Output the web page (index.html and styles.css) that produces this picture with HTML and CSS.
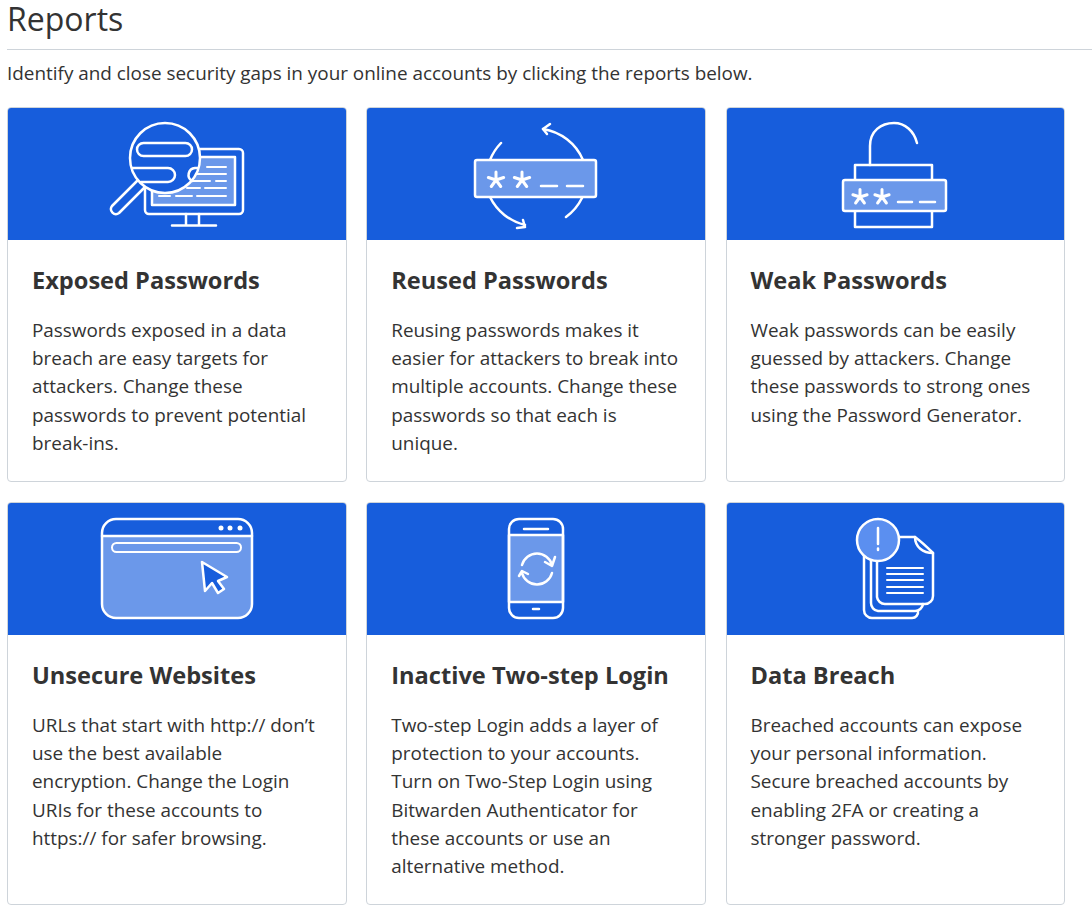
FILE: index.html
```html
<!DOCTYPE html>
<html>
    <head>
        <title>Reports</title>
        <meta charset="utf8"/>
        <link rel="stylesheet" href="styles.css">
    </head>
    <body>
        <div class="page-header"><h1>Reports</h1></div>
        <p class="intro">Identify and close security gaps in your online accounts by clicking the reports below.</p>
        <div class="report-list">
            <div class="card">
                <div class="card-head">
                    <svg class="art" width="146" height="112" viewBox="104 117 146 112">
                        <rect class="line" x="145" y="148" width="98" height="65" rx="4"/>
                        <rect class="line light" x="152" y="156" width="83" height="48"/>
                        <path class="line" d="M186 213V224M199 213V224M172 224.500H216"/>
                        <path class="line thin" d="M207 166H226M197 173H226M192 180H210M216 180H226M187 187H200M205 187H226M159 195H170M176 195H192M197 195H226"/>
                        <path class="line blue" d="M137 180L112 205a5 5 0 0 0 7 7L144 187"/>
                        <circle class="line blue" cx="165" cy="157" r="35"/>
                        <rect class="line" x="137" y="142" width="55" height="13" rx="6.500"/>
                        <path class="line" d="M132 167H168a7 7 0 0 1 0 14H141M197 167H195a7 7 0 0 0 -3 13"/>
                    </svg>
                </div>
                <div class="card-body">
                    <h3>Exposed Passwords</h3>
                    <p>Passwords exposed in a data breach are easy targets for attackers. Change these passwords to prevent potential break-ins.</p>
                </div>
            </div>
            <div class="card">
                <div class="card-head">
                    <svg class="art" width="130" height="112" viewBox="471 117 130 112">
                        <path class="line" d="M543 128A52.500 52.500 0 0 1 583 159M501 142A52.500 52.500 0 0 0 490 159M490 196A52.500 52.500 0 0 0 525 224M582 197A52.500 52.500 0 0 1 566 216"/>
                        <path class="line" d="M550 123L543 128L547 133M523 219L525 226L517 227"/>
                        <rect class="line light" x="475" y="159" width="121" height="37" rx="2"/>
                        <path class="line star" d="M496 179V171M496 179L503.600 176.500M496 179L500.700 185.500M496 179L491.300 185.500M496 179L488.400 176.500M522 179V171M522 179L529.600 176.500M522 179L526.700 185.500M522 179L517.300 185.500M522 179L514.400 176.500"/>
                        <path class="line" d="M541 185H557M567 185H583"/>
                    </svg>
                </div>
                <div class="card-body">
                    <h3>Reused Passwords</h3>
                    <p>Reusing passwords makes it easier for attackers to break into multiple accounts. Change these passwords so that each is unique.</p>
                </div>
            </div>
            <div class="card">
                <div class="card-head">
                    <svg class="art" width="112" height="112" viewBox="840 117 112 112">
                        <path class="line" d="M871 164V145C871 130 882 122 895 122C906 122 915 130 918 142"/>
                        <rect class="line" x="856" y="164" width="77" height="62"/>
                        <rect class="line light" x="844" y="179" width="103" height="31" rx="2"/>
                        <path class="line star" d="M861 196V188.500M861 196L868.100 193.700M861 196L865.400 202M861 196L856.600 202M861 196L853.900 193.700M883 196V188.500M883 196L890.100 193.700M883 196L887.400 202M883 196L878.600 202M883 196L875.900 193.700"/>
                        <path class="line" d="M899 201H913M921 201H936"/>
                    </svg>
                </div>
                <div class="card-body">
                    <h3>Weak Passwords</h3>
                    <p>Weak passwords can be easily guessed by attackers. Change these passwords to strong ones using the Password Generator.</p>
                </div>
            </div>
            <div class="card">
                <div class="card-head">
                    <svg class="art" width="156" height="106" viewBox="99 516 156 106">
                        <path class="line light" d="M102 536H252V604a14 14 0 0 1 -14 14H116a14 14 0 0 1 -14 -14Z"/>
                        <path class="line" d="M102 536V533a14 14 0 0 1 14 -14H238a14 14 0 0 1 14 14V536"/>
                        <circle class="dot" cx="221" cy="528" r="2.500"/>
                        <circle class="dot" cx="230" cy="528" r="2.500"/>
                        <circle class="dot" cx="240" cy="528" r="2.500"/>
                        <rect class="line thin" x="112" y="543" width="129" height="9" rx="4.500"/>
                        <path class="line blue" d="M202 562L205 591L212 583L218 593L224 589L218 581L227 577Z"/>
                    </svg>
                </div>
                <div class="card-body">
                    <h3>Unsecure Websites</h3>
                    <p>URLs that start with http:// don’t use the best available encryption. Change the Login URIs for these accounts to https:// for safer browsing.</p>
                </div>
            </div>
            <div class="card">
                <div class="card-head">
                    <svg class="art" width="60" height="106" viewBox="506 516 60 106">
                        <rect class="line light" x="509" y="535" width="54" height="67"/>
                        <rect class="line" x="509" y="519" width="54" height="99" rx="10"/>
                        <path class="line" d="M524 529H548M533 609H539"/>
                        <path class="line" d="M522 565A15.500 15.500 0 0 1 552 565M545 562L552 566L555 557M552 573A15.500 15.500 0 0 1 522 573M519 576L522 571L528 574"/>
                    </svg>
                </div>
                <div class="card-body">
                    <h3>Inactive Two-step Login</h3>
                    <p>Two-step Login adds a layer of protection to your accounts. Turn on Two-Step Login using Bitwarden Authenticator for these accounts or use an alternative method.</p>
                </div>
            </div>
            <div class="card">
                <div class="card-head">
                    <svg class="art" width="82" height="106" viewBox="854 516 82 106">
                        <path class="line" d="M864 555V610a8 8 0 0 0 8 8H912a6 6 0 0 0 6 -7"/>
                        <path class="line" d="M871 558V603a8 8 0 0 0 7 8H915a8 8 0 0 0 8 -7"/>
                        <path class="line" d="M900 537H915C923 543 928 548 933 553V596a8 8 0 0 1 -8 8H885a8 8 0 0 1 -8 -7V560"/>
                        <path class="line" d="M915 537C915 547 923 553 933 553"/>
                        <path class="line thin" d="M887 568H923M887 574H923M887 580H923M887 587H923M887 593H923"/>
                        <circle class="line bright" cx="878" cy="540" r="21"/>
                        <path class="line" d="M878 528V544M878 548.500V550"/>
                    </svg>
                </div>
                <div class="card-body">
                    <h3>Data Breach</h3>
                    <p>Breached accounts can expose your personal information. Secure breached accounts by enabling 2FA or creating a stronger password.</p>
                </div>
            </div>
        </div>
    </body>
</html>
```

FILE: styles.css
```css
*{
    box-sizing: border-box;
}
body,h1,h3,p{
    margin: 0px;
    padding: 0px;
}
body{
    padding-left: 7px;
    font-family: "Open Sans", "Liberation Sans", sans-serif;
    color: #333333;
    background-color: #fff;
}
.page-header{
    height: 50px;
    border-bottom: 1px solid #ced4da;
}
h1{
    font-size: 32px;
    font-weight: 400;
    line-height: 37px;
}
.intro{
    margin-top: 9px;
    font-size: 18.9px;
    line-height: 28px;
}
.report-list{
    display: grid;
    grid-template-columns: 340px 340px 339px;
    gap: 20px 19.250px;
    width: 1058px;
    margin-top: 20px;
}
.card{
    border: 1px solid #ced4da;
    border-radius: 4px;
    overflow: hidden;
}
.card-head{
    display: flex;
    justify-content: center;
    align-items: center;
    height: 132px;
    background-color: #175ddc;
}
.card-body{
    padding: 24px 24px 23.600px;
}
h3{
    font-size: 23.600px;
    font-weight: 700;
    line-height: 32px;
    margin-bottom: 19.700px;
}
.card-body p{
    font-size: 18.9px;
    line-height: 28.350px;
}
.line{
    fill: none;
    stroke: #fff;
    stroke-width: 2.500;
    stroke-linecap: round;
    stroke-linejoin: round;
}
.line.thin{
    stroke-width: 2;
}
.line.star{
    stroke-width: 3;
}
.line.light{
    fill: #6b98ea;
}
.line.blue{
    fill: #175ddc;
}
.line.bright{
    fill: #5b8ff0;
}
.dot{
    fill: #fff;
}
```
